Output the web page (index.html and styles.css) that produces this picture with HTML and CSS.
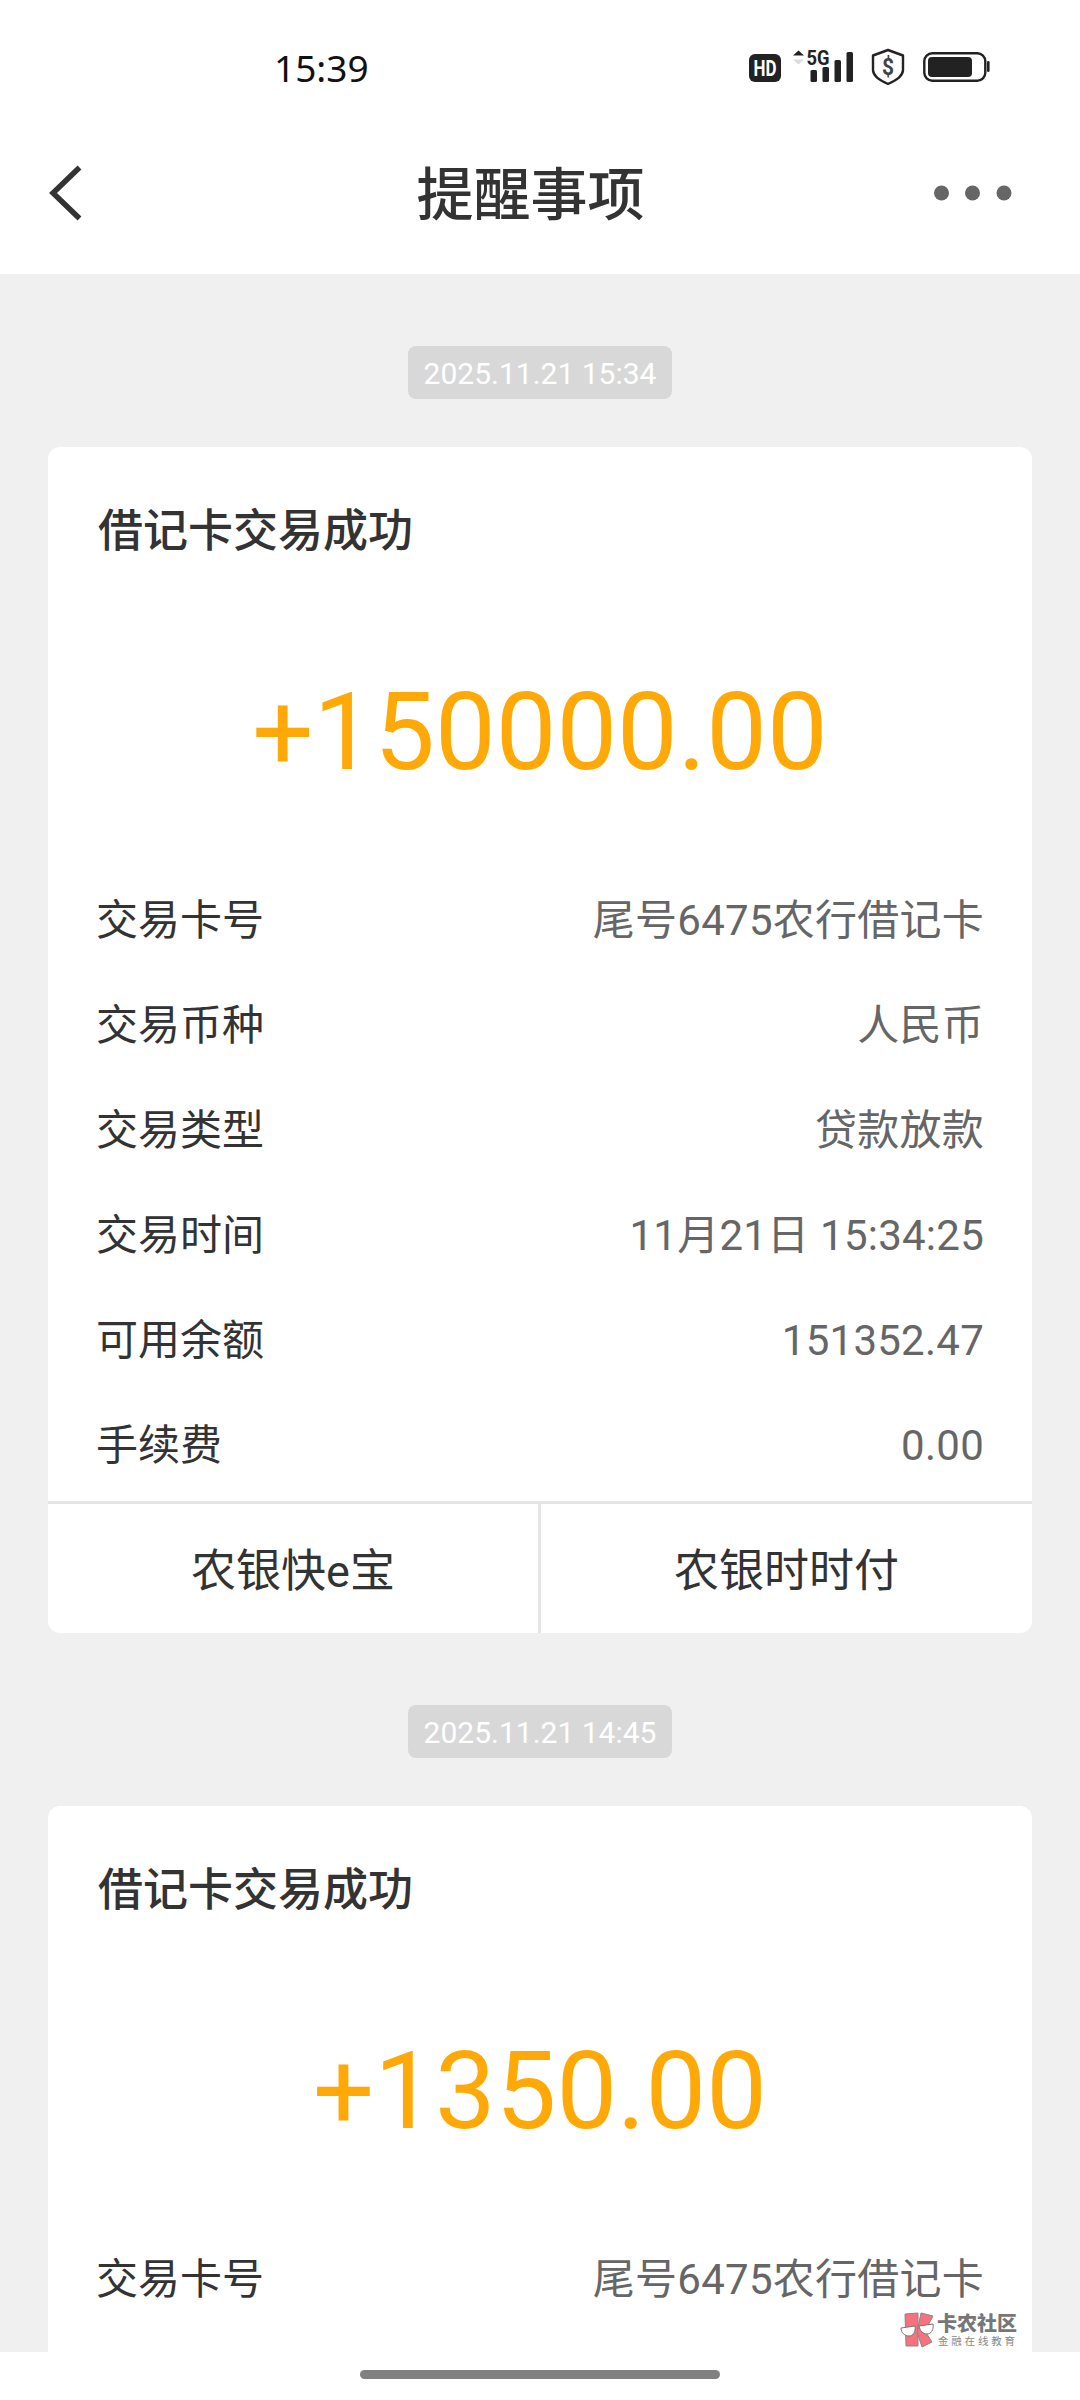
FILE: index.html
```html
<!DOCTYPE html>
<html lang="zh-CN">
<head>
<meta charset="utf-8">
<title>提醒事项</title>
<link rel="stylesheet" href="styles.css">
</head>
<body>
<div class="screen">
  <div class="status">
    <span class="clock">15:39</span>
    <svg class="status-icons" width="250" height="50" viewBox="0 0 250 50">
      <rect x="9" y="14" width="32" height="28" rx="6" fill="#222"/>
      <text x="25" y="35.5" class="hd" textLength="23" lengthAdjust="spacingAndGlyphs">HD</text>
      <path d="M58.500 10.500l5.500 5h-11z" fill="#222"/>
      <path d="M58.500 24.500l5.500-5h-11z" fill="#ddd"/>
      <text x="66.500" y="25" class="g5" textLength="23" lengthAdjust="spacingAndGlyphs">5G</text>
      <g fill="#222"><rect x="70.500" y="30" width="6.500" height="12" rx="1.500"/><rect x="82.500" y="27" width="6.500" height="15" rx="1.500"/><rect x="94.500" y="20" width="6.500" height="22" rx="1.500"/><rect x="106.500" y="12" width="6.500" height="30" rx="1.500"/></g>
      <path d="M148 10l15 5.500v14.500c0 6-7 10.500-15 14-8-3.500-15-8-15-14v-14.500z" fill="none" stroke="#222" stroke-width="2.400" stroke-linejoin="round"/>
      <text x="148" y="35" class="coin" textLength="12" lengthAdjust="spacingAndGlyphs">$</text>
      <rect x="184.300" y="13.300" width="61" height="27.500" rx="8" fill="none" stroke="#222" stroke-width="2.400"/>
      <rect x="188" y="17" width="44" height="20" rx="4" fill="#222"/>
      <rect x="247" y="21" width="2.600" height="11" rx="1.300" fill="#222"/>
    </svg>
  </div>
  <header class="navbar">
    <svg class="back" width="36" height="60" viewBox="0 0 36 60"><path d="M31.500 4.500L5 30l26.500 25.500" fill="none" stroke="#333" stroke-width="5.500"/></svg>
    <h1>提醒事项</h1>
    <svg class="more" width="80" height="16" viewBox="0 0 80 16" fill="#666"><circle cx="8.500" cy="8" r="7.500"/><circle cx="39.500" cy="8" r="7.500"/><circle cx="71" cy="8" r="7.500"/></svg>
  </header>
  <main class="feed">
    <time class="stamp">2025.11.21 15:34</time>
    <section class="card">
      <h2>借记卡交易成功</h2>
      <p class="amount">+150000.00</p>
      <dl>
        <div class="row"><dt>交易卡号</dt><dd>尾号6475农行借记卡</dd></div>
        <div class="row"><dt>交易币种</dt><dd>人民币</dd></div>
        <div class="row"><dt>交易类型</dt><dd>贷款放款</dd></div>
        <div class="row"><dt>交易时间</dt><dd>11月21日 15:34:25</dd></div>
        <div class="row"><dt>可用余额</dt><dd>151352.47</dd></div>
        <div class="row"><dt>手续费</dt><dd>0.00</dd></div>
      </dl>
      <div class="actions"><a>农银快e宝</a><a>农银时时付</a></div>
    </section>
    <time class="stamp">2025.11.21 14:45</time>
    <section class="card">
      <h2>借记卡交易成功</h2>
      <p class="amount">+1350.00</p>
      <dl>
        <div class="row"><dt>交易卡号</dt><dd>尾号6475农行借记卡</dd></div>
      </dl>
    </section>
  </main>
  <footer class="gesture"><span class="handle"></span></footer>
  <div class="watermark">
    <svg width="34" height="38" viewBox="0 0 34 38">
      <g fill="#f7717f" stroke="#888" stroke-width="1"><path d="M5 3l13-1v33H6z"/><path d="M21 2l12 3-8 15 7 11-10 5-5-15z"/></g>
      <g fill="#fff" stroke="#777" stroke-width="1"><path d="M1 17l14-2c1 6-2 10-6 10s-8-3-8-8z"/><path d="M19 15l14-2c1 6-2 10-6 10s-7-3-8-8z"/></g>
    </svg>
    <div class="wm-text"><span class="wm-name">卡农社区</span><span class="wm-sub">金融在线教育</span></div>
  </div>
</div>
</body>
</html>
```
FILE: styles.css
```css
* { box-sizing: border-box; margin: 0; padding: 0; }
body { width: 1080px; height: 2400px; overflow: hidden; font-family: Roboto, "Noto Sans CJK SC", sans-serif; color: #333; background: #fff; }
.screen { position: relative; display: flex; flex-direction: column; height: 2400px; }
.status { display: flex; height: 112px; justify-content: space-between; align-items: flex-start; padding: 40px 90px 0 274px; }
.clock { font: 400 37px/55px "Noto Sans", sans-serif; color: #111; }
.hd { font: 700 22px Roboto, sans-serif; fill: #fff; text-anchor: middle; }
.g5 { font: 700 21px Roboto, sans-serif; fill: #222; }
.coin { font: 700 23px Roboto, sans-serif; fill: #444; text-anchor: middle; }
.navbar { display: grid; grid-template-columns: 36px 1fr 80px; align-items: center; height: 162px; padding: 0 67px 0 48px; }
.navbar h1 { font-size: 57px; font-weight: 500; line-height: 80px; text-align: center; padding: 6px 0 0 44px; }
.feed { flex: 1; min-height: 0; overflow: hidden; background: #f0f0f0; padding: 72px 48px 0; display: flex; flex-direction: column; align-items: center; }
.stamp { flex: none; height: 53px; padding: 0 16px; border-radius: 8px; background: #d8d8d8; color: #fff; font-size: 30px; line-height: 55px; white-space: nowrap; }
.card { flex: none; width: 984px; height: 1186px; margin: 48px 0 72px; background: #fff; border-radius: 12px; overflow: hidden; display: flex; flex-direction: column; }
.card h2 { font-size: 45px; font-weight: 500; line-height: 66px; padding: 52px 50px 0; }
.amount { font-size: 108px; line-height: 126px; margin-top: 104px; margin-bottom: 73px; text-align: center; color: #ffa908; }
.row { display: flex; justify-content: space-between; height: 105px; padding: 0 48px; font-size: 42px; line-height: 105px; white-space: nowrap; }
dd { color: #666; letter-spacing: 0.25px; }
.actions { margin-top: auto; display: grid; grid-template-columns: 493px 1fr; height: 132px; border-top: 3px solid #e5e5e5; font-size: 45px; line-height: 136px; text-align: center; }
.actions a:first-child { border-right: 3px solid #e5e5e5; }
.gesture { height: 48px; display: flex; justify-content: center; padding-top: 18px; background: #fff; }
.handle { width: 360px; height: 9px; border-radius: 5px; background: #808080; }
.watermark { position: absolute; left: 900px; top: 2311px; display: flex; gap: 3px; }
.wm-text { display: flex; flex-direction: column; white-space: nowrap; padding-top: 1px; }
.wm-name { font-size: 20px; font-weight: 900; line-height: 24px; color: #777; }
.wm-sub { font-size: 10.5px; line-height: 11px; letter-spacing: 2.8px; color: #888; padding-left: 1px; }
```
